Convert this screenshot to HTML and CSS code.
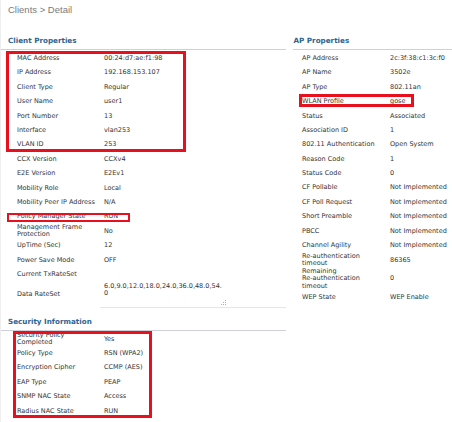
FILE: index.html
```html
<!DOCTYPE html>
<html>
<head>
<meta charset="utf-8">
<title>Clients &gt; Detail</title>
<link rel="stylesheet" href="styles.css">
</head>
<body>
<div class="page">
  <div class="title">Clients &gt; Detail</div>
  <div class="columns">
    <div class="col col-left">
      <section class="section">
        <h2 class="sec-title">Client Properties</h2>
        <div class="props">
          <div class="row"><span class="label">MAC Address</span><span class="value">00:24:d7:ae:f1:98</span></div>
          <div class="row"><span class="label">IP Address</span><span class="value">192.168.153.107</span></div>
          <div class="row"><span class="label">Client Type</span><span class="value">Regular</span></div>
          <div class="row"><span class="label">User Name</span><span class="value">user1</span></div>
          <div class="row"><span class="label">Port Number</span><span class="value">13</span></div>
          <div class="row"><span class="label">Interface</span><span class="value">vlan253</span></div>
          <div class="row"><span class="label">VLAN ID</span><span class="value">253</span></div>
          <div class="row"><span class="label">CCX Version</span><span class="value">CCXv4</span></div>
          <div class="row"><span class="label">E2E Version</span><span class="value">E2Ev1</span></div>
          <div class="row"><span class="label">Mobility Role</span><span class="value">Local</span></div>
          <div class="row"><span class="label">Mobility Peer IP Address</span><span class="value">N/A</span></div>
          <div class="row"><span class="label">Policy Manager State</span><span class="value">RUN</span></div>
          <div class="row"><span class="label">Management Frame Protection</span><span class="value">No</span></div>
          <div class="row"><span class="label">UpTime (Sec)</span><span class="value">12</span></div>
          <div class="row"><span class="label">Power Save Mode</span><span class="value">OFF</span></div>
          <div class="row"><span class="label">Current TxRateSet</span><span class="value"></span></div>
          <div class="row row-area"><span class="label">Data RateSet</span><span class="value value-area"><span class="textarea">6.0,9.0,12.0,18.0,24.0,36.0,48.0,54.0<svg class="grip" width="6" height="6" viewBox="0 0 6 6"><rect x="4" y="0" width="1" height="1"/><rect x="2" y="2" width="1" height="1"/><rect x="4" y="2" width="1" height="1"/><rect x="0" y="4" width="1" height="1"/><rect x="2" y="4" width="1" height="1"/><rect x="4" y="4" width="1" height="1"/></svg></span></span></div>
        </div>
      </section>
      <section class="section section-security">
        <h2 class="sec-title">Security Information</h2>
        <div class="props">
          <div class="row"><span class="label">Security Policy Completed</span><span class="value">Yes</span></div>
          <div class="row"><span class="label">Policy Type</span><span class="value">RSN (WPA2)</span></div>
          <div class="row"><span class="label">Encryption Cipher</span><span class="value">CCMP (AES)</span></div>
          <div class="row"><span class="label">EAP Type</span><span class="value">PEAP</span></div>
          <div class="row"><span class="label">SNMP NAC State</span><span class="value">Access</span></div>
          <div class="row"><span class="label">Radius NAC State</span><span class="value">RUN</span></div>
        </div>
      </section>
    </div>
    <div class="col col-right">
      <section class="section">
        <h2 class="sec-title">AP Properties</h2>
        <div class="props">
          <div class="row"><span class="label">AP Address</span><span class="value">2c:3f:38:c1:3c:f0</span></div>
          <div class="row"><span class="label">AP Name</span><span class="value">3502e</span></div>
          <div class="row"><span class="label">AP Type</span><span class="value">802.11an</span></div>
          <div class="row"><span class="label">WLAN Profile</span><span class="value">gose</span></div>
          <div class="row"><span class="label">Status</span><span class="value">Associated</span></div>
          <div class="row"><span class="label">Association ID</span><span class="value">1</span></div>
          <div class="row"><span class="label">802.11 Authentication</span><span class="value">Open System</span></div>
          <div class="row"><span class="label">Reason Code</span><span class="value">1</span></div>
          <div class="row"><span class="label">Status Code</span><span class="value">0</span></div>
          <div class="row"><span class="label">CF Pollable</span><span class="value">Not Implemented</span></div>
          <div class="row"><span class="label">CF Poll Request</span><span class="value">Not Implemented</span></div>
          <div class="row"><span class="label">Short Preamble</span><span class="value">Not Implemented</span></div>
          <div class="row"><span class="label">PBCC</span><span class="value">Not Implemented</span></div>
          <div class="row"><span class="label">Channel Agility</span><span class="value">Not Implemented</span></div>
          <div class="row"><span class="label"><span class="nowrap">Re-authentication</span> timeout</span><span class="value">86365</span></div>
          <div class="row"><span class="label">Remaining <span class="nowrap">Re-authentication</span> timeout</span><span class="value">0</span></div>
          <div class="row"><span class="label">WEP State</span><span class="value">WEP Enable</span></div>
        </div>
      </section>
    </div>
  </div>
  <div class="mark mark-client"></div>
  <div class="mark mark-policy"></div>
  <div class="mark mark-wlan"></div>
  <div class="mark mark-security"></div>
</div>
</body>
</html>
```

FILE: styles.css
```css
html, body {
  margin: 0;
  padding: 0;
  background: #ffffff;
}

body {
  font-family: "DejaVu Sans", Verdana, sans-serif;
  font-size: 6.5px;
  color: #333333;
}

.page {
  position: relative;
  width: 452px;
  height: 422px;
  overflow: hidden;
  box-sizing: border-box;
  border-left: 1px solid #eeeeee;
}

.title {
  font-family: "Liberation Sans", Arial, sans-serif;
  font-size: 9.5px;
  line-height: 12px;
  color: #7a7a7a;
  padding: 3.5px 0 0 7px;
}

.columns {
  display: flex;
  gap: 7px;
  margin-top: 20.5px;
  margin-left: -1px;
}

.col-left {
  width: 286px;
  flex: none;
}

.col-right {
  width: 159px;
  flex: none;
}

.sec-title {
  margin: 0;
  font-family: "DejaVu Sans", Verdana, sans-serif;
  font-weight: bold;
  font-size: 7.2px;
  line-height: 10px;
  color: #30638f;
  padding: 0 0 3px 8px;
  border-bottom: 1px solid #cfcfda;
}

.col-right .sec-title {
  padding-left: 0.5px;
}

.props {
  padding-top: 1.5px;
}

.row {
  display: grid;
  grid-template-columns: 104px 1fr;
  align-items: center;
  min-height: 14.4px;
  line-height: 7.2px;
}

.label {
  padding: 0 4px 0 17px;
}

.nowrap {
  white-space: nowrap;
}

.value {
  white-space: nowrap;
}

.col-right .row {
  grid-template-columns: 97px 1fr;
  line-height: 7.5px;
}

.col-right .label {
  padding: 0 8px 0 9px;
}

.row-area .value-area {
  margin-left: -4px;
  padding-top: 1px;
  border-bottom: 1px solid #e6e6e6;
  white-space: normal;
}

.textarea {
  position: relative;
  display: block;
  box-sizing: border-box;
  width: 127px;
  height: 24px;
  padding: 0.5px 3px 0 4px;
  line-height: 7.2px;
  word-break: break-all;
}

.grip {
  position: absolute;
  right: 0;
  bottom: 1px;
  fill: #b0b0b0;
}

.section-security {
  margin-top: 8.8px;
}

.mark {
  position: absolute;
  box-sizing: border-box;
  border: 3px solid #e8101c;
}

.mark-client {
  left: 5px;
  top: 51px;
  width: 180px;
  height: 101px;
}

.mark-policy {
  left: 6px;
  top: 213px;
  width: 123px;
  height: 9px;
  border-width: 2px;
}

.mark-wlan {
  left: 298px;
  top: 94px;
  width: 115px;
  height: 13px;
}

.mark-security {
  left: 12px;
  top: 331px;
  width: 139px;
  height: 87px;
}
```
